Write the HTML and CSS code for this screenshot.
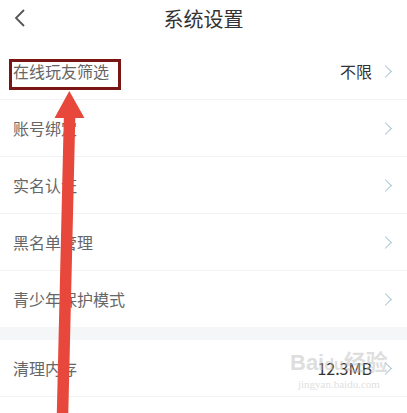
FILE: index.html
```html
<!DOCTYPE html>
<html lang="zh-CN">
<head>
    <meta charset="UTF-8" />
    <meta name="viewport" content="width=device-width, initial-scale=1" />
    <title>系统设置</title>
    <link rel="stylesheet" href="styles.css">
</head>
<body>
    <div class="page">
        <div class="header">
            <svg class="back" width="14" height="20" viewBox="0 0 14 20">
                <polyline points="11,2 3,10 11,18" fill="none" stroke="#555" stroke-width="1.8" />
            </svg>
            <h1>系统设置</h1>
        </div>

        <div class="group">
            <div class="row">
                <span class="label">在线玩友筛选</span>
                <span class="value">不限</span>
                <span class="chev"></span>
            </div>
            <div class="row">
                <span class="label">账号绑定</span>
                <span class="chev"></span>
            </div>
            <div class="row">
                <span class="label">实名认证</span>
                <span class="chev"></span>
            </div>
            <div class="row">
                <span class="label">黑名单管理</span>
                <span class="chev"></span>
            </div>
            <div class="row last">
                <span class="label">青少年保护模式</span>
                <span class="chev"></span>
            </div>
        </div>

        <div class="gap"></div>

        <div class="group">
            <div class="row">
                <span class="label">清理内存</span>
                <span class="value">12.3MB</span>
                <span class="chev"></span>
            </div>
        </div>

        <!-- 标注：红框 + 箭头 -->
        <div class="mark-box"></div>
        <svg class="mark-arrow" width="407" height="413" viewBox="0 0 407 413">
            <polygon points="69.3,91 84.5,118 75.3,118 68.3,413 56.8,413 63.8,118 54.5,118" fill="#e8473b" />
        </svg>

        <div class="watermark">
            <div class="wm-big">Bai<span class="wm-du">du</span>经验</div>
            <div class="wm-small">jingyan.baidu.com</div>
        </div>
    </div>
</body>
</html>
```

FILE: styles.css
```css
body {
    margin: 0;
    background-color: #fff;
    font-family: "Noto Sans CJK SC", "Noto Sans", sans-serif;
}
.page {
    position: relative;
    width: 407px;
    height: 413px;
    overflow: hidden;
}
.header {
    height: 43px;
    display: flex;
    align-items: flex-start;
    justify-content: center;
}
.header h1 {
    margin: 0;
    font-size: 20px;
    font-weight: normal;
    color: #333;
    line-height: 38px;
}
.back {
    position: absolute;
    left: 13px;
    top: 8px;
}
.row {
    height: 56px;
    display: flex;
    align-items: center;
    padding: 0 14px 0 13px;
    border-bottom: 1px solid #f1f2f4;
}
.row.last {
    border-bottom: none;
}
.label {
    flex: 1;
    font-size: 16px;
    color: #666;
}
.value {
    font-size: 16px;
    color: #333;
    margin-right: 9px;
}
.chev {
    width: 8px;
    height: 8px;
    border-top: 1.6px solid #a8c5d2;
    border-right: 1.6px solid #a8c5d2;
    transform: rotate(45deg);
    margin-right: 3px;
}
.gap {
    height: 13px;
    background-color: #f5f6f8;
}
.mark-box {
    position: absolute;
    left: 9px;
    top: 59px;
    width: 106px;
    height: 25px;
    border: 3px solid #7a1516;
}
.mark-arrow {
    position: absolute;
    left: 0;
    top: 0;
}
.watermark {
    position: absolute;
    left: 290px;
    top: 350px;
    color: rgba(190, 190, 190, 0.5);
    font-family: "Liberation Serif", serif;
    text-align: center;
}
.wm-big {
    font-size: 22px;
    font-weight: bold;
    line-height: 26px;
    font-family: "Liberation Sans", "Noto Sans CJK SC", sans-serif;
}
.wm-du {
    font-size: 16px;
}
.wm-small {
    font-size: 11px;
    line-height: 12px;
}
```
